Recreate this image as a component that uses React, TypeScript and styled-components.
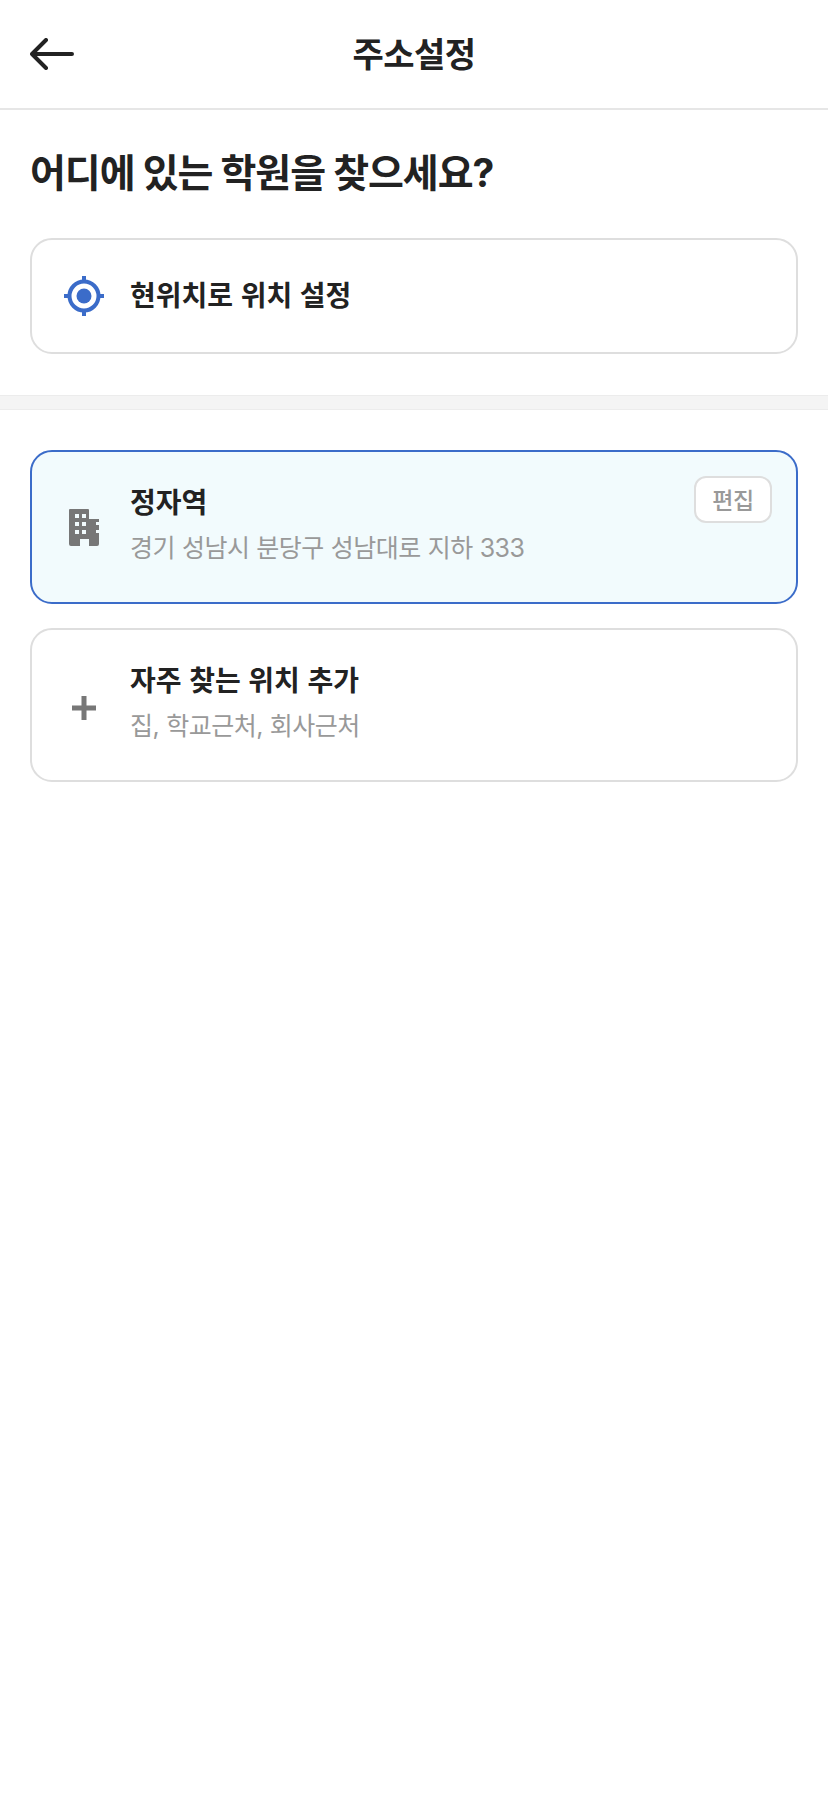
import React from 'react';
import styled, { createGlobalStyle } from 'styled-components';

const COLORS = {
  text: '#222222',
  gray: '#999999',
  icon: '#777777',
  line: '#dedede',
  blue: '#3b6cc9',
  mint: '#f2fbfd',
};

const GlobalStyle = createGlobalStyle`
  html, body {
    margin: 0;
    padding: 0;
    background: #fff;
  }
  body {
    font-family: 'Inter', 'Noto Sans CJK KR', sans-serif;
    color: ${COLORS.text};
  }
`;

const Page = styled.div`
  width: 828px;
  min-height: 1800px;
  background: #fff;
`;

const Header = styled.header`
  height: 110px;
  box-sizing: border-box;
  border-bottom: 2px solid #e6e6e6;
  padding: 0 30px;
  display: grid;
  grid-template-columns: 1fr auto 1fr;
  align-items: center;
`;

const BackButton = styled.button`
  border: 0;
  background: none;
  padding: 0;
  width: 44px;
  height: 32px;
  display: flex;
`;

const Title = styled.h1`
  margin: 0;
  padding-top: 1px;
  font-size: 34px;
  font-weight: 700;
  letter-spacing: -0.015em;
  line-height: 44px;
`;

const Section = styled.section`
  padding: 38px 30px 41px;
`;

const Heading = styled.h2`
  margin: 0 0 40px;
  font-size: 39px;
  font-weight: 700;
  letter-spacing: -0.027em;
  line-height: 50px;
`;

const Band = styled.div`
  height: 15px;
  box-sizing: border-box;
  background: #f4f4f4;
  border-top: 1px solid #ececec;
  border-bottom: 1px solid #ececec;
`;

const List = styled.section`
  padding: 40px 30px 0;
  display: flex;
  flex-direction: column;
  gap: 24px;
`;

const Card = styled.div<{ $active?: boolean; $height: number }>`
  height: ${(p) => p.$height}px;
  box-sizing: border-box;
  border: 2px solid ${(p) => (p.$active ? COLORS.blue : COLORS.line)};
  background: ${(p) => (p.$active ? COLORS.mint : '#fff')};
  border-radius: 22px;
  padding: 24px;
  display: flex;
  align-items: center;
`;

const IconSlot = styled.div<{ $drop?: number }>`
  width: 56px;
  margin-right: 18px;
  padding-top: ${(p) => p.$drop ?? 0}px;
  flex: none;
  display: flex;
  justify-content: center;
`;

const TextBlock = styled.div<{ $lift?: number }>`
  display: flex;
  flex-direction: column;
  gap: 13px;
  flex: 1;
  padding-bottom: ${(p) => p.$lift ?? 0}px;
`;

const CardTitle = styled.div`
  font-size: 28px;
  font-weight: 700;
  letter-spacing: 0;
  word-spacing: 1px;
  line-height: 32px;
`;

const CardSub = styled.div`
  font-size: 25px;
  font-weight: 400;
  letter-spacing: -0.02em;
  word-spacing: 0.4px;
  line-height: 32px;
  color: ${COLORS.gray};
`;

const EditButton = styled.button`
  align-self: flex-start;
  width: 78px;
  height: 47px;
  box-sizing: border-box;
  flex: none;
  border: 2px solid ${COLORS.line};
  border-radius: 12px;
  background: #fff;
  font-family: inherit;
  font-size: 23px;
  font-weight: 500;
  letter-spacing: -0.02em;
  color: ${COLORS.gray};
  padding: 0 0 2px;
`;

const ArrowIcon = () => (
  <svg width="44" height="32" viewBox="0 0 44 32" fill="none">
    <path
      d="M16 2 L2 16 L16 30 M2 16 H42"
      stroke={COLORS.text}
      strokeWidth="4"
      strokeLinecap="round"
      strokeLinejoin="round"
    />
  </svg>
);

const TargetIcon = () => (
  <svg width="40" height="40" viewBox="0 0 40 40" fill="none">
    <circle cx="20" cy="20" r="14.5" stroke={COLORS.blue} strokeWidth="4" />
    <circle cx="20" cy="20" r="7.5" fill={COLORS.blue} />
    <path d="M20 0 V6 M20 34 V40 M0 20 H6 M34 20 H40" stroke={COLORS.blue} strokeWidth="4" />
  </svg>
);

const BuildingIcon = () => (
  <svg width="30" height="37" viewBox="0 0 30 37">
    <path
      fillRule="evenodd"
      fill={COLORS.icon}
      d="M1 0 H19 Q20 0 20 1 V10 H30 V13 H27 V16 H30 V21 H27 V24 H30 V35 Q30 37 28 37 H20 V30 H11 V37 H2 Q0 37 0 35 V1 Q0 0 1 0 Z
         M6 5 V9 H10 V5 Z M13 5 V9 H17 V5 Z
         M6 13 V17 H10 V13 Z M13 13 V17 H17 V13 Z
         M6 21 V25 H10 V21 Z M13 21 V25 H17 V21 Z"
    />
  </svg>
);

const PlusIcon = () => (
  <svg width="24" height="24" viewBox="0 0 24 24" fill="none">
    <path d="M12 0 V24 M0 12 H24" stroke={COLORS.icon} strokeWidth="5" />
  </svg>
);

export default function App() {
  return (
    <Page>
      <GlobalStyle />
      <Header>
        <BackButton aria-label="뒤로">
          <ArrowIcon />
        </BackButton>
        <Title>주소설정</Title>
      </Header>
      <Section>
        <Heading>어디에 있는 학원을 찾으세요?</Heading>
        <Card $height={116}>
          <IconSlot>
            <TargetIcon />
          </IconSlot>
          <TextBlock>
            <CardTitle>현위치로 위치 설정</CardTitle>
          </TextBlock>
        </Card>
      </Section>
      <Band />
      <List>
        <Card $active $height={154}>
          <IconSlot>
            <BuildingIcon />
          </IconSlot>
          <TextBlock $lift={4}>
            <CardTitle>정자역</CardTitle>
            <CardSub>경기 성남시 분당구 성남대로 지하 333</CardSub>
          </TextBlock>
          <EditButton>편집</EditButton>
        </Card>
        <Card $height={154}>
          <IconSlot $drop={6}>
            <PlusIcon />
          </IconSlot>
          <TextBlock $lift={4}>
            <CardTitle>자주 찾는 위치 추가</CardTitle>
            <CardSub>집, 학교근처, 회사근처</CardSub>
          </TextBlock>
        </Card>
      </List>
    </Page>
  );
}
